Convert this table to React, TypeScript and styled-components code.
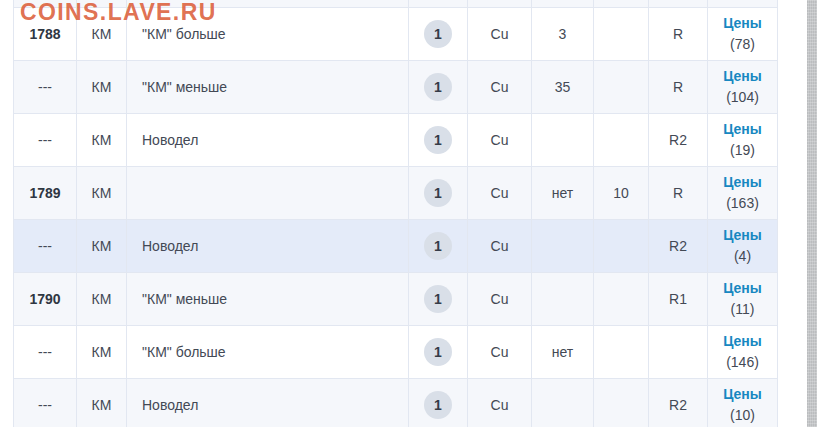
import React from "react";
import styled, { createGlobalStyle } from "styled-components";

const GlobalStyle = createGlobalStyle`
  html, body {
    margin: 0;
    padding: 0;
    background: #ffffff;
    font-family: "Liberation Sans", Arial, sans-serif;
    overflow: hidden;
  }
`;

const Page = styled.div`
  display: flex;
  width: 817px;
  height: 427px;
  overflow: hidden;
`;

const Content = styled.div`
  position: relative;
  width: 807px;
  padding-left: 13px;
  box-sizing: border-box;
  background: #ffffff;
`;

const Texture = styled.div`
  flex: 1;
  background-color: #c6c8ca;
  background-image:
    repeating-linear-gradient(0deg, rgba(255,255,255,0.2) 0 1px, transparent 1px 3px),
    repeating-linear-gradient(90deg, rgba(0,0,0,0.06) 0 1px, transparent 1px 2px);
`;

const Watermark = styled.div`
  position: absolute;
  left: 20px;
  top: -2px;
  font-family: "Liberation Sans", Arial, sans-serif;
  font-weight: bold;
  font-size: 23px;
  letter-spacing: 1.4px;
  color: rgba(220, 96, 60, 0.9);
  line-height: 28px;
`;

const Table = styled.div`
  width: 765px;
  display: flex;
  flex-direction: column;
`;

const cols = "63px 50px 282px 59px 64px 62px 55px 59px 71px";

const Row = styled.div<{ tone: "white" | "stripe" | "hover"; stub?: boolean }>`
  display: grid;
  grid-template-columns: ${cols};
  height: ${({ stub }) => (stub ? "7px" : "52px")};
  border-top: ${({ stub }) => (stub ? "none" : "1px solid #e2e7f1")};
  background: ${({ tone }) =>
    tone === "white" ? "#ffffff" : tone === "hover" ? "#e4ebf9" : "#f5f7fb"};
`;

const Cell = styled.div<{ align?: "left" | "center" }>`
  border-left: 1px solid #e2e7f1;
  display: flex;
  align-items: center;
  justify-content: ${({ align }) => (align === "left" ? "flex-start" : "center")};
  padding-left: ${({ align }) => (align === "left" ? "15px" : "0")};
  font-size: 14px;
  color: #434955;
  &:last-child {
    border-right: 1px solid #e2e7f1;
  }
`;

const Year = styled.span`
  font-weight: bold;
  color: #2f3642;
`;

const Badge = styled.span`
  width: 28px;
  height: 28px;
  border-radius: 50%;
  background: #d9dfe8;
  display: flex;
  align-items: center;
  justify-content: center;
  font-weight: bold;
  font-size: 14px;
  color: #353c48;
`;

const Prices = styled.div`
  display: flex;
  flex-direction: column;
  align-items: center;
  line-height: 21px;
`;

const PriceLink = styled.a`
  color: #1787c1;
  font-weight: bold;
  text-decoration: none;
`;

interface Coin {
  year: string;
  mint: string;
  note: string;
  metal: string;
  a: string;
  b: string;
  rarity: string;
  count: number;
  tone: "white" | "stripe" | "hover";
}

const coins: Coin[] = [
  { year: "1788", mint: "КМ", note: "\"КМ\" больше", metal: "Cu", a: "3", b: "", rarity: "R", count: 78, tone: "white" },
  { year: "---", mint: "КМ", note: "\"КМ\" меньше", metal: "Cu", a: "35", b: "", rarity: "R", count: 104, tone: "stripe" },
  { year: "---", mint: "КМ", note: "Новодел", metal: "Cu", a: "", b: "", rarity: "R2", count: 19, tone: "white" },
  { year: "1789", mint: "КМ", note: "", metal: "Cu", a: "нет", b: "10", rarity: "R", count: 163, tone: "stripe" },
  { year: "---", mint: "КМ", note: "Новодел", metal: "Cu", a: "", b: "", rarity: "R2", count: 4, tone: "hover" },
  { year: "1790", mint: "КМ", note: "\"КМ\" меньше", metal: "Cu", a: "", b: "", rarity: "R1", count: 11, tone: "stripe" },
  { year: "---", mint: "КМ", note: "\"КМ\" больше", metal: "Cu", a: "нет", b: "", rarity: "", count: 146, tone: "white" },
  { year: "---", mint: "КМ", note: "Новодел", metal: "Cu", a: "", b: "", rarity: "R2", count: 10, tone: "stripe" },
];

export default function App() {
  return (
    <>
      <GlobalStyle />
      <Page>
        <Content>
          <Table>
            <Row tone="stripe" stub>
              {Array.from({ length: 9 }).map((_, i) => (
                <Cell key={i} />
              ))}
            </Row>
            {coins.map((c, i) => (
              <Row key={i} tone={c.tone}>
                <Cell>{c.year === "---" ? c.year : <Year>{c.year}</Year>}</Cell>
                <Cell>{c.mint}</Cell>
                <Cell align="left">{c.note}</Cell>
                <Cell>
                  <Badge>1</Badge>
                </Cell>
                <Cell>{c.metal}</Cell>
                <Cell>{c.a}</Cell>
                <Cell>{c.b}</Cell>
                <Cell>{c.rarity}</Cell>
                <Cell>
                  <Prices>
                    <PriceLink href="#">Цены</PriceLink>
                    <span>({c.count})</span>
                  </Prices>
                </Cell>
              </Row>
            ))}
          </Table>
          <Watermark>COINS.LAVE.RU</Watermark>
        </Content>
        <Texture />
      </Page>
    </>
  );
}
